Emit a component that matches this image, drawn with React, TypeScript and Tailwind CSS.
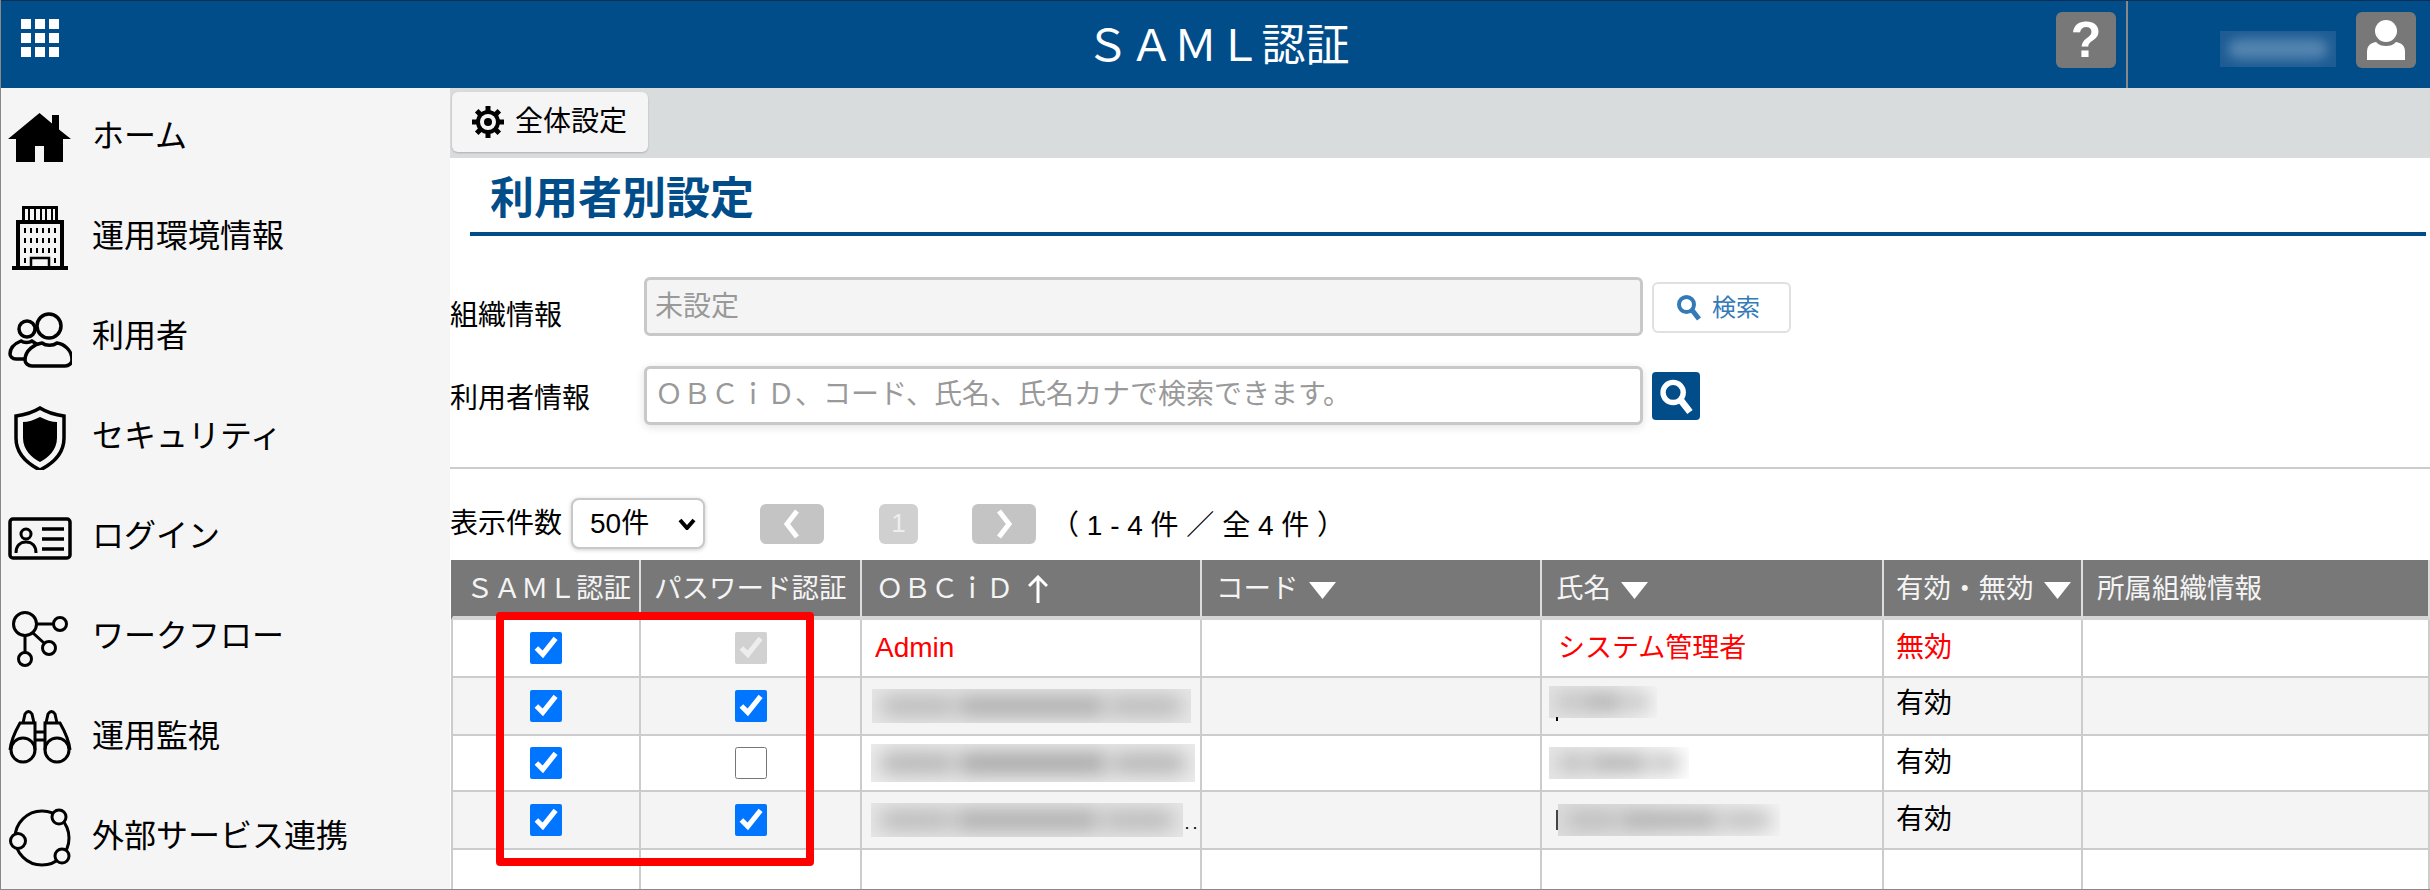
import React from 'react';

// Sidebar icons, each drawn in a 64 x 64 box
const iconHome = (
  <path fill="#000" d="M31.5 7 44 17.5V9h7v14.5L63 33h-8v23H36V40h-9v16H8V33H0Z" />
);

const iconBuilding = (
  <g fill="none" stroke="#000">
    <path strokeWidth="4" d="M4 62h56M10 60V16h44v44" />
    <path strokeWidth="3" d="M15.500 14V1.500h33V14" />
    <path strokeWidth="2" d="M21 3v11M27 3v11M33 3v11M38 3v11M44 3v11" />
    <path strokeWidth="2" d="M17 22v5M23 22v5M29 22v5M35 22v5M41 22v5M47 22v5M17 32v5M23 32v5M29 32v5M35 32v5M41 32v5M47 32v5M17 42v5M23 42v5M29 42v5M35 42v5M41 42v5M47 42v5M17 52v5M47 52v5" />
    <path strokeWidth="2.500" d="M23 60v-8h18v8" />
  </g>
);

const iconUsers = (
  <g fill="#f5f5f5" stroke="#000" strokeWidth="3.500">
    <path d="M17 53H8c-4 0-6-3-6-5 0-7 6-11 11-13 3 2 8 2 11 0l6 4" />
    <circle cx="19" cy="23" r="8" />
    <path d="M24 60c-4 0-7-3-7-6 0-10 10-16 17-17 4 3 11 3 15 0 7 1 15 7 15 17 0 3-3 6-7 6Z" />
    <circle cx="41" cy="20" r="12" />
  </g>
);

const iconShield = (
  <g>
    <path fill="none" stroke="#000" strokeWidth="3.500" d="M32 2c-8 5-16 7-24 8v22c0 16 12 26 24 32 12-6 24-16 24-32V10c-8-1-16-3-24-8Z" />
    <path fill="#000" d="M32 11c-6 3-12 5-17 5v16c0 12 9 20 17 24 8-4 17-12 17-24V16c-5 0-11-2-17-5Z" />
  </g>
);

const iconCard = (
  <g fill="none" stroke="#000">
    <rect x="2" y="13" width="60" height="39" rx="3" strokeWidth="3.500" />
    <circle cx="18" cy="28" r="5" strokeWidth="3" />
    <path strokeWidth="3" d="M8 47c0-7 4-11 10-11s10 4 10 11" />
    <path strokeWidth="3.500" d="M34 23h22M34 33h22M34 43h22" />
  </g>
);

const iconFlow = (
  <g fill="none" stroke="#000" strokeWidth="3">
    <circle cx="17" cy="18" r="11.500" />
    <circle cx="52" cy="18" r="6.500" />
    <circle cx="41" cy="42" r="6.500" />
    <circle cx="17" cy="53" r="6.500" />
    <path d="M29 18h16M25 27l11 10M17 30v16" />
  </g>
);

const iconBinoculars = (
  <g fill="none" stroke="#000" strokeWidth="3">
    <path d="M2 44C3 34 8 24 12 17h15v27M62 44C61 34 56 24 52 17H37v27" />
    <path d="M15 17l2-9q3.500-5 7 0l2 9M38 17l2-9q3.500-5 7 0l2 9" />
    <path d="M27 26h10M27 34h10" />
    <circle cx="15" cy="44" r="12" />
    <circle cx="49" cy="44" r="12" />
  </g>
);

const iconService = (
  <g fill="#f5f5f5" stroke="#000" strokeWidth="3">
    <circle cx="34" cy="32" r="27" fill="none" />
    <circle cx="51" cy="11" r="7" />
    <circle cx="10" cy="35" r="7.500" />
    <circle cx="54" cy="50" r="7" />
  </g>
);

const menuItems = [
  { label: 'ホーム', icon: iconHome },
  { label: '運用環境情報', icon: iconBuilding },
  { label: '利用者', icon: iconUsers },
  { label: 'セキュリティ', icon: iconShield },
  { label: 'ログイン', icon: iconCard },
  { label: 'ワークフロー', icon: iconFlow },
  { label: '運用監視', icon: iconBinoculars },
  { label: '外部サービス連携', icon: iconService },
];

const SearchIcon: React.FC<{ className: string; color: string }> = ({ className, color }) => (
  <svg viewBox="0 0 26 27" className={className} fill="none" stroke={color}>
    <circle cx="10.500" cy="10.500" r="7.500" strokeWidth="4" />
    <path d="M16 16l7 9" strokeWidth="5" />
  </svg>
);

const GearIcon = () => (
  <svg viewBox="0 0 32 32" className="w-8 h-8 shrink-0">
    <path stroke="#000" strokeWidth="5" d="M16 0v32M0 16h32M4.700 4.700l22.600 22.600M27.300 4.700 4.700 27.300" />
    <circle cx="16" cy="16" r="12" fill="#000" />
    <circle cx="16" cy="16" r="8" fill="#f5f5f5" />
    <circle cx="16" cy="16" r="4" fill="#000" />
  </svg>
);

const SortDown = () => (
  <svg viewBox="0 0 27 17" className="inline-block w-[27px] h-[17px] ml-[10px] align-[-1px]" fill="#fff">
    <path d="M0 0h27L13.500 17Z" />
  </svg>
);

const SortUp = () => (
  <svg viewBox="0 0 20 28" className="inline-block w-5 h-7 ml-[14px] align-[-5px]" fill="none" stroke="#fff" strokeWidth="3">
    <path d="M10 28V2M1 11l9-9 9 9" />
  </svg>
);

// Blurred-out personal data
const Blurred: React.FC<{ className: string }> = ({ className }) => (
  <div className={`overflow-hidden p-2 flex ${className}`}>
    <div className="flex-1 h-full rounded-full bg-[#b4b4b4] blur-[10px]"></div>
    <div className="flex-[2] h-full rounded-full bg-[#a4a4a4] blur-[10px]"></div>
    <div className="flex-1 h-full rounded-full bg-[#b4b4b4] blur-[10px]"></div>
  </div>
);

const Checkbox: React.FC<{ checked?: boolean; disabled?: boolean }> = ({ checked, disabled }) => (
  <input type="checkbox" defaultChecked={checked} disabled={disabled} className="block w-8 h-8 mx-auto" />
);

const columns = [
  { label: 'ＳＡＭＬ認証', width: 'w-[190px]', pad: 'pl-[13px] border-l-2', mark: null },
  { label: 'パスワード認証', width: 'w-[221px]', pad: 'pl-[13px]', mark: null },
  { label: 'ＯＢＣｉＤ', width: 'w-[340px]', pad: 'pl-[14px]', mark: <SortUp /> },
  { label: 'コード', width: 'w-[340px]', pad: 'pl-[14px]', mark: <SortDown /> },
  { label: '氏名', width: 'w-[342px]', pad: 'pl-[14px]', mark: <SortDown /> },
  { label: '有効・無効', width: 'w-[199px]', pad: 'pl-[12px]', mark: <SortDown /> },
  { label: '所属組織情報', width: '', pad: 'pl-[14px]', mark: null },
];

const rows = [
  { h: 'h-[58px]', bg: 'bg-white', saml: true, pass: true, passDisabled: true, id: <span className="text-[#f00]">Admin</span>, name: <span className="text-[#f00]">システム管理者</span>, status: <span className="text-[#f00]">無効</span> },
  { h: 'h-[58px]', bg: 'bg-[#f4f4f4]', saml: true, pass: true, id: <Blurred className="w-[319px] h-[34px] -ml-[3px] bg-[#e6e6e6]" />, name: <div className="-mt-[8px] flex items-end"><Blurred className="w-[108px] h-[32px] -ml-[9px] bg-gradient-to-r from-[#e2e2e2] to-transparent" /><span className="w-[2px] h-[4px] bg-black -ml-[101px] -mb-[3px]"></span></div>, status: <div className="-mt-[4px]">有効</div> },
  { h: 'h-[56px]', bg: 'bg-white', saml: true, pass: false, id: <Blurred className="w-[324px] h-[38px] -ml-[4px] bg-[#ececec]" />, name: <Blurred className="w-[140px] h-[32px] -ml-[9px] bg-gradient-to-r from-[#e6e6e6] to-transparent" />, status: '有効' },
  { h: 'h-[58px]', bg: 'bg-[#f4f4f4]', saml: true, pass: true, id: <div className="flex items-end"><Blurred className="w-[312px] h-[34px] -ml-[4px] bg-[#e6e6e6]" /><span className="text-[16px] leading-[20px] -mb-[2px]">‥</span></div>, name: <div className="flex items-center"><span className="w-[2px] h-[20px] bg-[#444] -ml-[2px]"></span><Blurred className="w-[222px] h-[32px] bg-gradient-to-r from-[#dcdcdc] to-transparent" /></div>, status: '有効' },
];

const Chevron: React.FC<{ d: string }> = ({ d }) => (
  <svg viewBox="0 0 20 30" className="w-5 h-[30px]" fill="none" stroke="#fff" strokeWidth="5">
    <path d={d} />
  </svg>
);

const App: React.FC = () => {
  return (
    <div className="relative w-[2430px] h-[890px] overflow-hidden border-l border-b border-[#888] bg-white text-black font-['Liberation_Sans','Noto_Sans_CJK_JP',sans-serif]">
      {/* Header */}
      <header className="h-[88px] flex bg-[#004d8a] border-t border-[#0a2f55]">
        <div className="w-[378px] shrink-0 pl-[20px] pt-[18px]">
          <div className="grid grid-cols-[10px_10px_10px] gap-[4px]">
            {[0, 1, 2, 3, 4, 5, 6, 7, 8].map(i => (
              <div key={i} className="w-[10px] h-[10px] bg-white"></div>
            ))}
          </div>
        </div>
        <div className="flex-1 flex items-center justify-center text-white text-[44px] leading-none pt-[2px]">ＳＡＭＬ認証</div>
        <div className="flex items-start pt-[11px]">
          <div className="w-[60px] h-[56px] rounded-md bg-[#787878] flex items-center justify-center text-white text-[50px] font-bold leading-none">?</div>
          <div className="w-[2px] h-[87px] -mt-[11px] ml-[10px] bg-[#888]"></div>
          <div className="ml-[92px] mt-[19px] w-[116px] h-[36px] overflow-hidden bg-[#1d5c94] p-2">
            <div className="h-full rounded-full bg-[#5585b0] blur-[6px]"></div>
          </div>
          <div className="ml-[20px] mr-[14px] w-[60px] h-[56px] rounded-md bg-[#787878] flex items-center justify-center">
            <svg viewBox="0 0 40 44" className="w-10 h-11" fill="#fff">
              <circle cx="20" cy="13" r="11" />
              <path d="M1 42V34c0-6 3-9 9-10 3 3 6 4 10 4s7-1 10-4c6 1 9 4 9 10v8Z" />
            </svg>
          </div>
        </div>
      </header>

      <div className="flex h-[801px]">
        {/* Sidebar */}
        <nav className="w-[449px] shrink-0 bg-[#f5f5f5]">
          {menuItems.map(item => (
            <div key={item.label} className="h-[100px] flex items-center pl-[7px]">
              <svg viewBox="0 0 64 64" className="w-16 h-16 shrink-0">{item.icon}</svg>
              <span className="ml-[20px] text-[32px] leading-none -mt-[4px]">{item.label}</span>
            </div>
          ))}
        </nav>

        {/* Main */}
        <main className="flex-1 min-w-0">
          <div className="h-[70px] bg-[#d9dcdd] pt-[4px] pl-[2px]">
            <div className="w-[196px] h-[60px] rounded-md bg-[#f5f5f5] shadow-[0_1px_2px_rgba(0,0,0,0.2)] flex items-center pl-[20px] gap-[11px] text-[28px]">
              <GearIcon />
              <span>全体設定</span>
            </div>
          </div>

          <div className="ml-[20px] mr-[4px] h-[78px] border-b-4 border-[#004d8a] pl-[20px] pt-[17px]">
            <h2 className="text-[44px] leading-[48px] font-bold text-[#004d8a]">利用者別設定</h2>
          </div>

          {/* Search form */}
          <div className="mt-[41px] flex items-start text-[28px]">
            <div className="w-[194px] pt-[19px] leading-[40px]">組織情報</div>
            <input disabled placeholder="未設定" className="w-[999px] h-[59px] rounded-md border-[3px] border-[#c8c8c8] bg-[#f4f4f4] pl-[8px] pt-[1px] placeholder:text-[#999]" />
            <button className="ml-[9px] mt-[5px] w-[139px] h-[51px] rounded-md border-2 border-[#e0e0e0] bg-white flex items-center pl-[22px] gap-[10px] text-[24px] text-[#337ab7]">
              <SearchIcon className="w-[26px] h-[27px]" color="#337ab7" />
              <span>検索</span>
            </button>
          </div>
          <div className="mt-[30px] flex items-start text-[28px]">
            <div className="w-[194px] pt-[13px] leading-[40px]">利用者情報</div>
            <input placeholder="ＯＢＣｉＤ、コード、氏名、氏名カナで検索できます。" className="w-[999px] h-[59px] rounded-md border-[3px] border-[#c8c8c8] bg-white pl-[8px] pb-[2px] shadow-[0_2px_10px_rgba(0,0,0,0.12)] placeholder:text-[#999]" />
            <button className="ml-[9px] mt-[6px] w-[48px] h-[48px] rounded bg-[#004d8a] flex items-center justify-center">
              <SearchIcon className="w-[35px] h-[37px]" color="#fff" />
            </button>
          </div>

          <div className="mt-[42px] h-[2px] bg-[#ccc]"></div>

          {/* Pager */}
          <div className="mt-[29px] h-[51px] flex items-center text-[28px]">
            <span className="w-[112px] whitespace-nowrap">表示件数</span>
            <div className="relative ml-[9px]">
              <select className="block w-[134px] h-[51px] appearance-none rounded-lg border-2 border-[#c8c8c8] bg-white pl-[17px] shadow-[0_1px_4px_rgba(0,0,0,0.2)]">
                <option>50件</option>
              </select>
              <svg viewBox="0 0 18 12" className="absolute right-[9px] top-[20px] w-[18px] h-[12px] pointer-events-none" fill="none" stroke="#000" strokeWidth="4">
                <path d="M2 2l7 8 7-8" />
              </svg>
            </div>
            <div className="ml-[55px] w-[64px] h-[40px] rounded-md bg-[#c4c4c4] flex items-center justify-center">
              <Chevron d="M15 2 5 15l10 13" />
            </div>
            <div className="ml-[55px] w-[39px] h-[40px] rounded-md bg-[#d0d0d0] flex items-center justify-center text-[26px] text-[#eee]">1</div>
            <div className="ml-[54px] w-[64px] h-[40px] rounded-md bg-[#c4c4c4] flex items-center justify-center">
              <Chevron d="M5 2l10 13L5 28" />
            </div>
            <span className="ml-[15px] mt-[4px] whitespace-pre">（ 1 - 4 件 ／ 全 4 件 ）</span>
          </div>

          {/* Table */}
          <table className="mt-[11px] ml-px w-[1979px] table-fixed border-separate border-spacing-0 text-[28px]">
            <thead>
              <tr>
                {columns.map(col => (
                  <th key={col.label} className={`${col.width} ${col.pad} h-[60px] pt-[2px] bg-[#787878] border-r-2 border-b-4 border-r-[#ddd] border-b-[#d4d4d4] border-l-[#787878] text-left text-[27.5px] font-normal text-[#f4f4f4] whitespace-nowrap overflow-hidden`}>
                    {col.label}
                    {col.mark}
                  </th>
                ))}
              </tr>
            </thead>
            <tbody>
              {rows.map((row, i) => (
                <tr key={i} className={row.bg}>
                  <td className={`${row.h} border-l-2 border-r-2 border-b-2 border-[#ccc]`}>
                    <Checkbox checked={row.saml} />
                  </td>
                  <td className={`${row.h} border-r-2 border-b-2 border-[#ccc]`}>
                    <Checkbox checked={row.pass} disabled={row.passDisabled} />
                  </td>
                  <td className={`${row.h} pl-[13px] border-r-2 border-b-2 border-[#ccc]`}>{row.id}</td>
                  <td className={`${row.h} border-r-2 border-b-2 border-[#ccc]`}></td>
                  <td className={`${row.h} pl-[16px] border-r-2 border-b-2 border-[#ccc] text-[27px]`}>{row.name}</td>
                  <td className={`${row.h} pl-[12px] border-r-2 border-b-2 border-[#ccc]`}>{row.status}</td>
                  <td className={`${row.h} border-r-2 border-b-2 border-[#ccc]`}></td>
                </tr>
              ))}
              <tr>
                <td className="h-[39px] border-l-2 border-r-2 border-[#ccc]"></td>
                <td className="border-r-2 border-[#ccc]"></td>
                <td className="border-r-2 border-[#ccc]"></td>
                <td className="border-r-2 border-[#ccc]"></td>
                <td className="border-r-2 border-[#ccc]"></td>
                <td className="border-r-2 border-[#ccc]"></td>
                <td className="border-r-2 border-[#ccc]"></td>
              </tr>
            </tbody>
          </table>
        </main>
      </div>

      {/* Red highlight over the two checkbox columns */}
      <div className="absolute left-[495px] top-[612px] w-[318px] h-[254px] border-8 border-[#f00] rounded-sm pointer-events-none"></div>
    </div>
  );
};

export default App;
